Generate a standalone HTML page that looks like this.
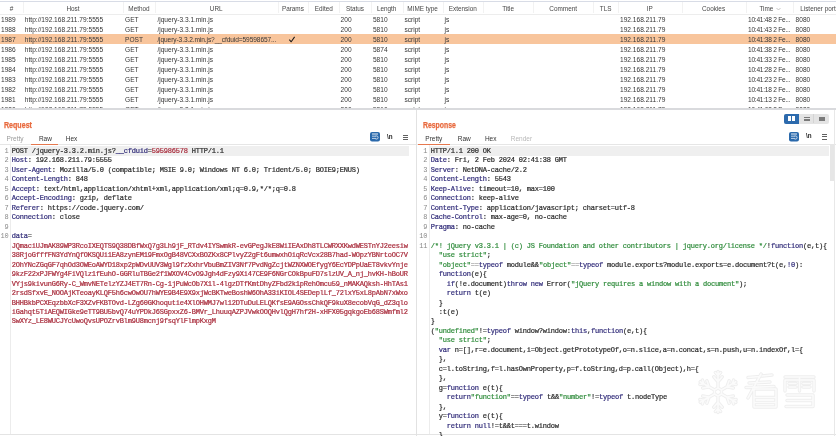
<!DOCTYPE html><html><head><meta charset="utf-8"><style>
*{margin:0;padding:0;box-sizing:border-box}
html,body{width:836px;height:436px;overflow:hidden;background:#fff;position:relative}
body{font-family:"Liberation Sans",sans-serif;color:#333}
.a{position:absolute;white-space:pre}
.hl{position:absolute;background:#dfe2ea}
.t{font-size:6.6px;line-height:10px;color:#363636}
.th{font-size:6.4px;line-height:11px;color:#484848;text-align:center}
.m{font-family:"Liberation Mono",monospace;font-size:7px;letter-spacing:-0.2px;line-height:9.47px;-webkit-text-stroke:0.2px currentColor}
.ln{color:#8a8a8a;-webkit-text-stroke:0}
.k{color:#2f2a78}
.v{color:#2a2a2a}
.r{color:#a82a3a}
.s{color:#2e8b3a}
.op{color:#888}
</style></head><body><div style="position:absolute;left:0;top:0;width:836px;height:436px;will-change:transform"><div class="hl" style="left:0;top:1px;width:836px;height:1px;background:#d8dce6"></div>
<div class="hl" style="left:0;top:14px;width:836px;height:1px;background:#ededed"></div>
<div class="a th" style="left:0px;top:3px;width:23px">#</div>
<div class="a th" style="left:23px;top:3px;width:100px">Host</div>
<div class="hl" style="left:23px;top:2px;width:1px;height:11px;background:#f2f2f2"></div>
<div class="a th" style="left:123px;top:3px;width:32px">Method</div>
<div class="hl" style="left:123px;top:2px;width:1px;height:11px;background:#f2f2f2"></div>
<div class="a th" style="left:155px;top:3px;width:122.5px">URL</div>
<div class="hl" style="left:155px;top:2px;width:1px;height:11px;background:#f2f2f2"></div>
<div class="a th" style="left:277.5px;top:3px;width:30.80000000000001px">Params</div>
<div class="hl" style="left:277.5px;top:2px;width:1px;height:11px;background:#f2f2f2"></div>
<div class="a th" style="left:308.3px;top:3px;width:31.099999999999966px">Edited</div>
<div class="hl" style="left:308.3px;top:2px;width:1px;height:11px;background:#f2f2f2"></div>
<div class="a th" style="left:339.4px;top:3px;width:31.100000000000023px">Status</div>
<div class="hl" style="left:339.4px;top:2px;width:1px;height:11px;background:#f2f2f2"></div>
<div class="a th" style="left:370.5px;top:3px;width:32.30000000000001px">Length</div>
<div class="hl" style="left:370.5px;top:2px;width:1px;height:11px;background:#f2f2f2"></div>
<div class="a th" style="left:402.8px;top:3px;width:39.69999999999999px">MIME type</div>
<div class="hl" style="left:402.8px;top:2px;width:1px;height:11px;background:#f2f2f2"></div>
<div class="a th" style="left:442.5px;top:3px;width:40.5px">Extension</div>
<div class="hl" style="left:442.5px;top:2px;width:1px;height:11px;background:#f2f2f2"></div>
<div class="a th" style="left:483px;top:3px;width:50.299999999999955px">Title</div>
<div class="hl" style="left:483px;top:2px;width:1px;height:11px;background:#f2f2f2"></div>
<div class="a th" style="left:533.3px;top:3px;width:59.80000000000007px">Comment</div>
<div class="hl" style="left:533.3px;top:2px;width:1px;height:11px;background:#f2f2f2"></div>
<div class="a th" style="left:593.1px;top:3px;width:25.100000000000023px">TLS</div>
<div class="hl" style="left:593.1px;top:2px;width:1px;height:11px;background:#f2f2f2"></div>
<div class="a th" style="left:618.2px;top:3px;width:63.299999999999955px">IP</div>
<div class="hl" style="left:618.2px;top:2px;width:1px;height:11px;background:#f2f2f2"></div>
<div class="a th" style="left:681.5px;top:3px;width:64.10000000000002px">Cookies</div>
<div class="hl" style="left:681.5px;top:2px;width:1px;height:11px;background:#f2f2f2"></div>
<div class="a th" style="left:745.6px;top:3px;width:41.60000000000002px">Time</div>
<svg style="position:absolute;left:776.2px;top:6.5px" width="5" height="4" viewBox="0 0 5 4"><path d="M0.5 1 L2.5 3 L4.5 1" stroke="#b0b0b0" stroke-width="0.7" fill="none"/></svg>
<div class="hl" style="left:745.6px;top:2px;width:1px;height:11px;background:#f2f2f2"></div>
<div class="a th" style="left:800.2px;top:3px;text-align:left">Listener port</div>
<div class="hl" style="left:793.2px;top:2px;width:1px;height:11px;background:#f2f2f2"></div>
<div class="a t" style="left:1px;top:15px;">1989</div>
<div class="a t" style="left:24.8px;top:15px;">http://192.168.211.79:5555</div>
<div class="a t" style="left:125px;top:15px;">GET</div>
<div class="a t" style="left:157.4px;top:15px;">/jquery-3.3.1.min.js</div>
<div class="a t" style="left:340.6px;top:15px;">200</div>
<div class="a t" style="left:372.9px;top:15px;">5810</div>
<div class="a t" style="left:404.4px;top:15px;">script</div>
<div class="a t" style="left:444.6px;top:15px;">js</div>
<div class="a t" style="left:620px;top:15px;">192.168.211.79</div>
<div class="a t" style="left:748px;top:15px;letter-spacing:-0.25px;">10:41:48 2 Fe...</div>
<div class="a t" style="left:795.6px;top:15px;">8080</div>
<div class="a t" style="left:1px;top:25px;">1988</div>
<div class="a t" style="left:24.8px;top:25px;">http://192.168.211.79:5555</div>
<div class="a t" style="left:125px;top:25px;">GET</div>
<div class="a t" style="left:157.4px;top:25px;">/jquery-3.3.1.min.js</div>
<div class="a t" style="left:340.6px;top:25px;">200</div>
<div class="a t" style="left:372.9px;top:25px;">5810</div>
<div class="a t" style="left:404.4px;top:25px;">script</div>
<div class="a t" style="left:444.6px;top:25px;">js</div>
<div class="a t" style="left:620px;top:25px;">192.168.211.79</div>
<div class="a t" style="left:748px;top:25px;letter-spacing:-0.25px;">10:41:43 2 Fe...</div>
<div class="a t" style="left:795.6px;top:25px;">8080</div>
<div class="hl" style="left:0;top:34px;width:836px;height:10px;background:#f8c59c"></div>
<div class="a t" style="left:1px;top:35px;">1987</div>
<div class="a t" style="left:24.8px;top:35px;">http://192.168.211.79:5555</div>
<div class="a t" style="left:125px;top:35px;">POST</div>
<div class="a t" style="left:157.4px;top:35px;letter-spacing:-0.1px;">/jquery-3.3.2.min.js?__cfduid=59598657...</div>
<div class="a t" style="left:340.6px;top:35px;">200</div>
<div class="a t" style="left:372.9px;top:35px;">5810</div>
<div class="a t" style="left:404.4px;top:35px;">script</div>
<div class="a t" style="left:444.6px;top:35px;">js</div>
<div class="a t" style="left:620px;top:35px;">192.168.211.79</div>
<div class="a t" style="left:748px;top:35px;letter-spacing:-0.25px;">10:41:38 2 Fe...</div>
<div class="a t" style="left:795.6px;top:35px;">8080</div>
<svg style="position:absolute;left:288px;top:36px" width="8" height="7" viewBox="0 0 8 7"><path d="M1.3 3.6 L3.2 5.8 L6.6 0.9" stroke="#1a1a1a" stroke-width="1.05" fill="none" stroke-linejoin="round"/></svg>
<div class="a t" style="left:1px;top:45px;">1986</div>
<div class="a t" style="left:24.8px;top:45px;">http://192.168.211.79:5555</div>
<div class="a t" style="left:125px;top:45px;">GET</div>
<div class="a t" style="left:157.4px;top:45px;">/jquery-3.3.1.min.js</div>
<div class="a t" style="left:340.6px;top:45px;">200</div>
<div class="a t" style="left:372.9px;top:45px;">5874</div>
<div class="a t" style="left:404.4px;top:45px;">script</div>
<div class="a t" style="left:444.6px;top:45px;">js</div>
<div class="a t" style="left:620px;top:45px;">192.168.211.79</div>
<div class="a t" style="left:748px;top:45px;letter-spacing:-0.25px;">10:41:38 2 Fe...</div>
<div class="a t" style="left:795.6px;top:45px;">8080</div>
<div class="a t" style="left:1px;top:55px;">1985</div>
<div class="a t" style="left:24.8px;top:55px;">http://192.168.211.79:5555</div>
<div class="a t" style="left:125px;top:55px;">GET</div>
<div class="a t" style="left:157.4px;top:55px;">/jquery-3.3.1.min.js</div>
<div class="a t" style="left:340.6px;top:55px;">200</div>
<div class="a t" style="left:372.9px;top:55px;">5810</div>
<div class="a t" style="left:404.4px;top:55px;">script</div>
<div class="a t" style="left:444.6px;top:55px;">js</div>
<div class="a t" style="left:620px;top:55px;">192.168.211.79</div>
<div class="a t" style="left:748px;top:55px;letter-spacing:-0.25px;">10:41:33 2 Fe...</div>
<div class="a t" style="left:795.6px;top:55px;">8080</div>
<div class="a t" style="left:1px;top:65px;">1984</div>
<div class="a t" style="left:24.8px;top:65px;">http://192.168.211.79:5555</div>
<div class="a t" style="left:125px;top:65px;">GET</div>
<div class="a t" style="left:157.4px;top:65px;">/jquery-3.3.1.min.js</div>
<div class="a t" style="left:340.6px;top:65px;">200</div>
<div class="a t" style="left:372.9px;top:65px;">5810</div>
<div class="a t" style="left:404.4px;top:65px;">script</div>
<div class="a t" style="left:444.6px;top:65px;">js</div>
<div class="a t" style="left:620px;top:65px;">192.168.211.79</div>
<div class="a t" style="left:748px;top:65px;letter-spacing:-0.25px;">10:41:28 2 Fe...</div>
<div class="a t" style="left:795.6px;top:65px;">8080</div>
<div class="a t" style="left:1px;top:75px;">1983</div>
<div class="a t" style="left:24.8px;top:75px;">http://192.168.211.79:5555</div>
<div class="a t" style="left:125px;top:75px;">GET</div>
<div class="a t" style="left:157.4px;top:75px;">/jquery-3.3.1.min.js</div>
<div class="a t" style="left:340.6px;top:75px;">200</div>
<div class="a t" style="left:372.9px;top:75px;">5810</div>
<div class="a t" style="left:404.4px;top:75px;">script</div>
<div class="a t" style="left:444.6px;top:75px;">js</div>
<div class="a t" style="left:620px;top:75px;">192.168.211.79</div>
<div class="a t" style="left:748px;top:75px;letter-spacing:-0.25px;">10:41:23 2 Fe...</div>
<div class="a t" style="left:795.6px;top:75px;">8080</div>
<div class="a t" style="left:1px;top:85px;">1982</div>
<div class="a t" style="left:24.8px;top:85px;">http://192.168.211.79:5555</div>
<div class="a t" style="left:125px;top:85px;">GET</div>
<div class="a t" style="left:157.4px;top:85px;">/jquery-3.3.1.min.js</div>
<div class="a t" style="left:340.6px;top:85px;">200</div>
<div class="a t" style="left:372.9px;top:85px;">5810</div>
<div class="a t" style="left:404.4px;top:85px;">script</div>
<div class="a t" style="left:444.6px;top:85px;">js</div>
<div class="a t" style="left:620px;top:85px;">192.168.211.79</div>
<div class="a t" style="left:748px;top:85px;letter-spacing:-0.25px;">10:41:18 2 Fe...</div>
<div class="a t" style="left:795.6px;top:85px;">8080</div>
<div class="a t" style="left:1px;top:95px;">1981</div>
<div class="a t" style="left:24.8px;top:95px;">http://192.168.211.79:5555</div>
<div class="a t" style="left:125px;top:95px;">GET</div>
<div class="a t" style="left:157.4px;top:95px;">/jquery-3.3.1.min.js</div>
<div class="a t" style="left:340.6px;top:95px;">200</div>
<div class="a t" style="left:372.9px;top:95px;">5810</div>
<div class="a t" style="left:404.4px;top:95px;">script</div>
<div class="a t" style="left:444.6px;top:95px;">js</div>
<div class="a t" style="left:620px;top:95px;">192.168.211.79</div>
<div class="a t" style="left:748px;top:95px;letter-spacing:-0.25px;">10:41:13 2 Fe...</div>
<div class="a t" style="left:795.6px;top:95px;">8080</div>
<div class="a t" style="left:1px;top:105px;">1980</div>
<div class="a t" style="left:24.8px;top:105px;">http://192.168.211.79:5555</div>
<div class="a t" style="left:125px;top:105px;">GET</div>
<div class="a t" style="left:157.4px;top:105px;">/jquery-3.3.1.min.js</div>
<div class="a t" style="left:340.6px;top:105px;">200</div>
<div class="a t" style="left:372.9px;top:105px;">5810</div>
<div class="a t" style="left:404.4px;top:105px;">script</div>
<div class="a t" style="left:444.6px;top:105px;">js</div>
<div class="a t" style="left:620px;top:105px;">192.168.211.79</div>
<div class="a t" style="left:748px;top:105px;letter-spacing:-0.25px;">10:41:08 2 Fe...</div>
<div class="a t" style="left:795.6px;top:105px;">8080</div>
<div class="hl" style="left:0;top:108px;width:836px;height:328px;background:#fff"></div>
<div class="hl" style="left:0;top:108px;width:836px;height:2px;background:#d9dadd"></div>
<div class="hl" style="left:416px;top:110px;width:1px;height:326px;background:#e2e2e2"></div>
<div class="a" style="left:4px;top:120.8px;font-size:8.4px;line-height:9px;font-weight:bold;color:#e8693d;-webkit-text-stroke:0.25px #e8693d;transform:scaleX(0.845);transform-origin:0 0">Request</div>
<div class="a" style="left:423px;top:120.8px;font-size:8.4px;line-height:9px;font-weight:bold;color:#e8693d;-webkit-text-stroke:0.25px #e8693d;transform:scaleX(0.82);transform-origin:0 0">Response</div>
<div class="a" style="left:6.6px;top:135px;font-size:6.5px;color:#9a9a9a">Pretty</div>
<div class="a" style="left:38.9px;top:135px;font-size:6.5px;color:#333">Raw</div>
<div class="a" style="left:65.8px;top:135px;font-size:6.5px;color:#333">Hex</div>
<div class="a" style="left:425.3px;top:135px;font-size:6.5px;color:#333">Pretty</div>
<div class="a" style="left:457.8px;top:135px;font-size:6.5px;color:#333">Raw</div>
<div class="a" style="left:484.9px;top:135px;font-size:6.5px;color:#333">Hex</div>
<div class="a" style="left:510.8px;top:135px;font-size:6.5px;color:#b8b8b8">Render</div>
<div class="hl" style="left:0;top:144px;width:416px;height:1px;background:#e6e6e6"></div>
<div class="hl" style="left:417px;top:144px;width:419px;height:1px;background:#e6e6e6"></div>
<div class="hl" style="left:31px;top:143.6px;width:27px;height:1px;background:#e6784e"></div>
<div class="hl" style="left:418px;top:143.6px;width:32px;height:1px;background:#e6784e"></div>
<svg style="position:absolute;left:370px;top:132.4px" width="10" height="9.5" viewBox="0 0 10 9.5">
<rect x="0" y="0" width="10" height="9.5" rx="2" fill="#2a69ab"/>
<path d="M2 2 H8" stroke="#fff" stroke-width="0.9"/>
<path d="M2 4.2 H6.2 M2 6.4 H6.2" stroke="#e4eef8" stroke-width="0.8"/>
<path d="M5.6 3.9 H6.5 A1.6 1.6 0 0 1 6.5 7.1 H5.6" stroke="#e4eef8" stroke-width="0.8" fill="none"/>
</svg>
<div class="a" style="left:386.8px;top:132.6px;font-size:7.4px;line-height:8px;color:#1e1e1e;font-weight:bold;transform:scaleX(0.85);transform-origin:0 0">\n</div>
<div class="hl" style="left:402.6px;top:134.70000000000002px;width:5.2px;height:0.9px;background:#606060"></div>
<div class="hl" style="left:402.6px;top:136.85000000000002px;width:5.2px;height:0.9px;background:#606060"></div>
<div class="hl" style="left:402.6px;top:139.00000000000003px;width:5.2px;height:0.9px;background:#606060"></div>
<svg style="position:absolute;left:789px;top:132px" width="10" height="9.5" viewBox="0 0 10 9.5">
<rect x="0" y="0" width="10" height="9.5" rx="2" fill="#2a69ab"/>
<path d="M2 2 H8" stroke="#fff" stroke-width="0.9"/>
<path d="M2 4.2 H6.2 M2 6.4 H6.2" stroke="#e4eef8" stroke-width="0.8"/>
<path d="M5.6 3.9 H6.5 A1.6 1.6 0 0 1 6.5 7.1 H5.6" stroke="#e4eef8" stroke-width="0.8" fill="none"/>
</svg>
<div class="a" style="left:805.8px;top:132.2px;font-size:7.4px;line-height:8px;color:#1e1e1e;font-weight:bold;transform:scaleX(0.85);transform-origin:0 0">\n</div>
<div class="hl" style="left:821.6px;top:134.3px;width:5.2px;height:0.9px;background:#606060"></div>
<div class="hl" style="left:821.6px;top:136.45000000000002px;width:5.2px;height:0.9px;background:#606060"></div>
<div class="hl" style="left:821.6px;top:138.60000000000002px;width:5.2px;height:0.9px;background:#606060"></div>
<div class="hl" style="left:784px;top:113.5px;width:45px;height:10px;border-radius:2px;background:#e4e4e4"></div>
<div class="hl" style="left:784px;top:113.5px;width:14.5px;height:10px;border-radius:2px 0 0 2px;background:#2c6aad"></div>
<div class="hl" style="left:788px;top:116px;width:3px;height:5px;background:#fff"></div>
<div class="hl" style="left:792px;top:116px;width:3px;height:5px;background:#fff"></div>
<div class="hl" style="left:803.5px;top:116.5px;width:6px;height:1.6px;background:#7a7a7a"></div>
<div class="hl" style="left:803.5px;top:119.3px;width:6px;height:1.6px;background:#7a7a7a"></div>
<div class="hl" style="left:813.2px;top:114px;width:0.6px;height:9px;background:#d4d4d4"></div>
<div class="hl" style="left:818.5px;top:116.5px;width:6.5px;height:4.5px;background:#7a7a7a"></div>
<div class="hl" style="left:10px;top:145px;width:1px;height:290px;background:#ececec"></div>
<div class="hl" style="left:429px;top:145px;width:1px;height:290px;background:#ececec"></div>
<div class="hl" style="left:0;top:434px;width:416px;height:1px;background:#e4e4e4"></div>
<div class="hl" style="left:417px;top:434px;width:419px;height:1px;background:#e4e4e4"></div>
<div class="hl" style="left:11px;top:146px;width:398px;height:9.5px;background:#efefef"></div>
<div class="hl" style="left:430px;top:146px;width:399px;height:9.5px;background:#efefef"></div>
<div class="hl" style="left:829.5px;top:144px;width:4.5px;height:37px;background:#e6e6e6"></div>
<div class="hl" style="left:834px;top:110px;width:1px;height:326px;background:#e8e8e8"></div>
<div class="a m ln" style="left:-11.4px;width:20px;text-align:right;top:147.0px">1</div>
<div class="a m" style="left:11.7px;top:147.0px"><span class="v">POST /jquery-3.3.2.min.js?</span><span class="k">__cfduid</span><span class="v">=</span><span class="r">595986578</span><span class="v"> HTTP/1.1</span></div>
<div class="a m ln" style="left:-11.4px;width:20px;text-align:right;top:156.47px">2</div>
<div class="a m" style="left:11.7px;top:156.47px"><span class="k">Host</span><span class="v">: 192.168.211.79:5555</span></div>
<div class="a m ln" style="left:-11.4px;width:20px;text-align:right;top:165.94px">3</div>
<div class="a m" style="left:11.7px;top:165.94px"><span class="k">User-Agent</span><span class="v">: Mozilla/5.0 (compatible; MSIE 9.0; Windows NT 6.0; Trident/5.0; BOIE9;ENUS)</span></div>
<div class="a m ln" style="left:-11.4px;width:20px;text-align:right;top:175.41px">4</div>
<div class="a m" style="left:11.7px;top:175.41px"><span class="k">Content-Length</span><span class="v">: 848</span></div>
<div class="a m ln" style="left:-11.4px;width:20px;text-align:right;top:184.88px">5</div>
<div class="a m" style="left:11.7px;top:184.88px"><span class="k">Accept</span><span class="v">: text/html,application/xhtml+xml,application/xml;q=0.9,*/*;q=0.8</span></div>
<div class="a m ln" style="left:-11.4px;width:20px;text-align:right;top:194.35px">6</div>
<div class="a m" style="left:11.7px;top:194.35px"><span class="k">Accept-Encoding</span><span class="v">: gzip, deflate</span></div>
<div class="a m ln" style="left:-11.4px;width:20px;text-align:right;top:203.82px">7</div>
<div class="a m" style="left:11.7px;top:203.82px"><span class="k">Referer</span><span class="v">: https://code.jquery.com/</span></div>
<div class="a m ln" style="left:-11.4px;width:20px;text-align:right;top:213.29000000000002px">8</div>
<div class="a m" style="left:11.7px;top:213.29000000000002px"><span class="k">Connection</span><span class="v">: close</span></div>
<div class="a m ln" style="left:-11.4px;width:20px;text-align:right;top:222.76px">9</div>
<div class="a m" style="left:11.7px;top:222.76px"></div>
<div class="a m ln" style="left:-11.4px;width:20px;text-align:right;top:232.23000000000002px">10</div>
<div class="a m" style="left:11.7px;top:232.23000000000002px"><span class="k">data</span><span class="v">=</span></div>
<div class="a m" style="left:11.7px;top:241.7px"><span class="r">JQmaciUJmAK89WP3RcoIXEQTS9Q38DBfWxQ7g3Lh9jF_RTdv4IYSwmkR-evGPegJkE8WiIEAxDh8TLCWRXXKwdWESTnYJ2eesiw</span></div>
<div class="a m" style="left:11.7px;top:251.17000000000002px"><span class="r">38RjoGfffFN3YdYnQfOKSQUi1EA8zynEM19FmxOgB48VCXxBOZKx8CPlvyZ2gFt6umwxhOiqRcVcx28B7had-WOpzYBNrtoOC7V</span></div>
<div class="a m" style="left:11.7px;top:260.64px"><span class="r">2OhYNcZGqGF7qhOd3OWEoAWYD18xp2pWDvUUV3Wgl9fzXxhrVbuBmZIV3Nf7PvdNgZcjtWZNXWOEfygY6EcYDPpUaET8vkvYnje</span></div>
<div class="a m" style="left:11.7px;top:270.11px"><span class="r">9kzF22xPJFWYg4FiVQlz1fEuhO-GGRluTBGe2f1WXOV4CvO9Jgh4dFzy9Xi47CE9F6NGrCOkBpuFD7slzUV_A_nj_hvKH-hBoUR</span></div>
<div class="a m" style="left:11.7px;top:279.58000000000004px"><span class="r">VYjs9kivunG6Ry-C_WmvNETelzYZJ4ET7Rn-Cg-1jPuWcOb7X1l-4lgzDTfKmtDhyZFbd2k1pRehOmcu59_nMAKAQksh-HhTAs1</span></div>
<div class="a m" style="left:11.7px;top:289.05px"><span class="r">2rsdSfxvE_NOOAjKTeoayKLQF5h6cwOwOU7hWYE9B4E9X9xjWcBKTweBoshW6OhA33iKIOL4SEDeplLf_72lxY5xL8pAbN7xWxo</span></div>
<div class="a m" style="left:11.7px;top:298.52px"><span class="r">BHHBkbPCXEqzbbXcF3XZvFKBTOvd-LZg60GKhoqutie4XlOHWMJ7wl12DTuDuLELQKfsE9AGOssChkQF9kuX8ecobVqG_dZ3qlo</span></div>
<div class="a m" style="left:11.7px;top:307.99px"><span class="r">iGahqt5TiAEQWIGke9eTT9BU5bvQ74uYPDkJ6SGpxxZ6-BMVr_LhuuqAZPJVwkOOQHvlQgH7hf2H-xHFX05gqkgoEb68SWmfml2</span></div>
<div class="a m" style="left:11.7px;top:317.46000000000004px"><span class="r">SwXYz_LE8WUCJYcUwoQvsUPOZrvBlm9U8mcnj9fsqYlFlmpKxgM</span></div>
<div class="a m ln" style="left:407.2px;width:20px;text-align:right;top:147.0px">1</div>
<div class="a m" style="left:430.8px;top:147.0px"><span class="v">HTTP/1.1 200 OK</span></div>
<div class="a m ln" style="left:407.2px;width:20px;text-align:right;top:156.47px">2</div>
<div class="a m" style="left:430.8px;top:156.47px"><span class="k">Date</span><span class="v">: Fri, 2 Feb 2024 02:41:38 GMT</span></div>
<div class="a m ln" style="left:407.2px;width:20px;text-align:right;top:165.94px">3</div>
<div class="a m" style="left:430.8px;top:165.94px"><span class="k">Server</span><span class="v">: NetDNA-cache/2.2</span></div>
<div class="a m ln" style="left:407.2px;width:20px;text-align:right;top:175.41px">4</div>
<div class="a m" style="left:430.8px;top:175.41px"><span class="k">Content-Length</span><span class="v">: 5543</span></div>
<div class="a m ln" style="left:407.2px;width:20px;text-align:right;top:184.88px">5</div>
<div class="a m" style="left:430.8px;top:184.88px"><span class="k">Keep-Alive</span><span class="v">: timeout=10, max=100</span></div>
<div class="a m ln" style="left:407.2px;width:20px;text-align:right;top:194.35px">6</div>
<div class="a m" style="left:430.8px;top:194.35px"><span class="k">Connection</span><span class="v">: keep-alive</span></div>
<div class="a m ln" style="left:407.2px;width:20px;text-align:right;top:203.82px">7</div>
<div class="a m" style="left:430.8px;top:203.82px"><span class="k">Content-Type</span><span class="v">: application/javascript; charset=utf-8</span></div>
<div class="a m ln" style="left:407.2px;width:20px;text-align:right;top:213.29000000000002px">8</div>
<div class="a m" style="left:430.8px;top:213.29000000000002px"><span class="k">Cache-Control</span><span class="v">: max-age=0, no-cache</span></div>
<div class="a m ln" style="left:407.2px;width:20px;text-align:right;top:222.76px">9</div>
<div class="a m" style="left:430.8px;top:222.76px"><span class="k">Pragma</span><span class="v">: no-cache</span></div>
<div class="a m ln" style="left:407.2px;width:20px;text-align:right;top:232.23000000000002px">10</div>
<div class="a m" style="left:430.8px;top:232.23000000000002px"></div>
<div class="a m ln" style="left:407.2px;width:20px;text-align:right;top:241.7px">11</div>
<div class="a m" style="left:430.8px;top:241.7px"><span class="s">/*! jQuery v3.3.1 | (c) JS Foundation and other contributors | jquery.org/license */</span><span class="v">!</span><span class="k">function</span><span class="v">(e,t){</span></div>
<div class="a m" style="left:430.8px;top:251.17000000000002px"><span class="v">  </span><span class="s">&quot;use strict&quot;</span><span class="v">;</span></div>
<div class="a m" style="left:430.8px;top:260.64px"><span class="v">  </span><span class="s">&quot;object&quot;</span><span class="op">==</span><span class="k">typeof</span><span class="v"> module&amp;&amp;</span><span class="s">&quot;object&quot;</span><span class="op">==</span><span class="k">typeof</span><span class="v"> module.exports?module.exports=e.document?t(e,</span><span class="k">!0</span><span class="v">):</span></div>
<div class="a m" style="left:430.8px;top:270.11px"><span class="v">  </span><span class="k">function</span><span class="v">(e){</span></div>
<div class="a m" style="left:430.8px;top:279.58000000000004px"><span class="v">    </span><span class="k">if</span><span class="v">(!e.document)</span><span class="k">throw new</span><span class="v"> Error(</span><span class="s">&quot;jQuery requires a window with a document&quot;</span><span class="v">);</span></div>
<div class="a m" style="left:430.8px;top:289.05px"><span class="v">    </span><span class="k">return</span><span class="v"> t(e)</span></div>
<div class="a m" style="left:430.8px;top:298.52px"><span class="v">  }</span></div>
<div class="a m" style="left:430.8px;top:307.99px"><span class="v">  :t(e)</span></div>
<div class="a m" style="left:430.8px;top:317.46000000000004px"><span class="v">}</span></div>
<div class="a m" style="left:430.8px;top:326.93px"><span class="v">(</span><span class="s">&quot;undefined&quot;</span><span class="v">!=</span><span class="k">typeof</span><span class="v"> window?window:</span><span class="k">this</span><span class="v">,</span><span class="k">function</span><span class="v">(e,t){</span></div>
<div class="a m" style="left:430.8px;top:336.4px"><span class="v">  </span><span class="s">&quot;use strict&quot;</span><span class="v">;</span></div>
<div class="a m" style="left:430.8px;top:345.87px"><span class="v">  </span><span class="k">var</span><span class="v"> n=[],r=e.document,i=Object.getPrototypeOf,o=n.slice,a=n.concat,s=n.push,u=n.indexOf,l={</span></div>
<div class="a m" style="left:430.8px;top:355.34000000000003px"><span class="v">  },</span></div>
<div class="a m" style="left:430.8px;top:364.81px"><span class="v">  c=l.toString,f=l.hasOwnProperty,p=f.toString,d=p.call(Object),h={</span></div>
<div class="a m" style="left:430.8px;top:374.28000000000003px"><span class="v">  },</span></div>
<div class="a m" style="left:430.8px;top:383.75px"><span class="v">  g=</span><span class="k">function</span><span class="v"> e(t){</span></div>
<div class="a m" style="left:430.8px;top:393.22px"><span class="v">    </span><span class="k">return</span><span class="s">&quot;function&quot;</span><span class="v">==</span><span class="k">typeof</span><span class="v"> t&amp;&amp;</span><span class="s">&quot;number&quot;</span><span class="v">!=</span><span class="k">typeof</span><span class="v"> t.nodeType</span></div>
<div class="a m" style="left:430.8px;top:402.69000000000005px"><span class="v">  },</span></div>
<div class="a m" style="left:430.8px;top:412.16px"><span class="v">  y=</span><span class="k">function</span><span class="v"> e(t){</span></div>
<div class="a m" style="left:430.8px;top:421.63px"><span class="v">    </span><span class="k">return null</span><span class="v">!=t&amp;&amp;t===t.window</span></div>
<div class="a m" style="left:430.8px;top:431.1px"><span class="v">  }</span></div>
<svg style="position:absolute;left:690px;top:360px" width="140" height="62" viewBox="0 0 140 62">
<defs><filter id="bl" x="-10%" y="-10%" width="120%" height="120%"><feGaussianBlur stdDeviation="0.5"/></filter></defs>
<g filter="url(#bl)" fill="none" stroke-linecap="round" stroke-linejoin="round">
<path d="M28.0 28.0 L28.0 11.5 M28.0 21.8 L32.2 16.8 M28.0 21.8 L23.8 16.8 M28.0 15.6 L30.6 12.5 M28.0 15.6 L25.4 12.5 M24.5 30.0 L10.2 21.8 M19.1 26.9 L16.9 20.8 M19.1 26.9 L12.7 28.0 M13.8 23.8 L12.4 20.0 M13.8 23.8 L9.9 24.5 M24.5 34.0 L10.2 42.2 M19.1 37.1 L12.7 36.0 M19.1 37.1 L16.9 43.2 M13.8 40.2 L9.9 39.5 M13.8 40.2 L12.4 44.0 M28.0 36.0 L28.0 52.5 M28.0 42.2 L23.8 47.2 M28.0 42.2 L32.2 47.2 M28.0 48.4 L25.4 51.5 M28.0 48.4 L30.6 51.5 M31.5 34.0 L45.8 42.3 M36.9 37.1 L39.1 43.2 M36.9 37.1 L43.3 36.0 M42.2 40.2 L43.6 44.0 M42.2 40.2 L46.1 39.5 M31.5 30.0 L45.8 21.8 M36.9 26.9 L43.3 28.0 M36.9 26.9 L39.1 20.8 M42.2 23.8 L46.1 24.5 M42.2 23.8 L43.6 20.0 M31.5 30.0 L28.0 28.0 L24.5 30.0 L24.5 34.0 L28.0 36.0 L31.5 34.0 Z M58 17.5 L70 16.5 M72 16 L82 15 M59 23 L80 22 M56 27.5 L84 26.5 M71 14 L58 38 M64 29 H86 V47 H64 Z M64 37.5 H86 M64 42.5 H86 M95 17 H124 M95 20 V31 M95 20 H124 V31 M109.5 17 V31 M99 23.5 H106 M99 27 H106 M113 23.5 H120 M113 27 H120 M97 35 H123 V46.5 H96 M97 40.5 H123" stroke="#eeeeee" stroke-width="3.4"/>
<path d="M28.0 28.0 L28.0 11.5 M28.0 21.8 L32.2 16.8 M28.0 21.8 L23.8 16.8 M28.0 15.6 L30.6 12.5 M28.0 15.6 L25.4 12.5 M24.5 30.0 L10.2 21.8 M19.1 26.9 L16.9 20.8 M19.1 26.9 L12.7 28.0 M13.8 23.8 L12.4 20.0 M13.8 23.8 L9.9 24.5 M24.5 34.0 L10.2 42.2 M19.1 37.1 L12.7 36.0 M19.1 37.1 L16.9 43.2 M13.8 40.2 L9.9 39.5 M13.8 40.2 L12.4 44.0 M28.0 36.0 L28.0 52.5 M28.0 42.2 L23.8 47.2 M28.0 42.2 L32.2 47.2 M28.0 48.4 L25.4 51.5 M28.0 48.4 L30.6 51.5 M31.5 34.0 L45.8 42.3 M36.9 37.1 L39.1 43.2 M36.9 37.1 L43.3 36.0 M42.2 40.2 L43.6 44.0 M42.2 40.2 L46.1 39.5 M31.5 30.0 L45.8 21.8 M36.9 26.9 L43.3 28.0 M36.9 26.9 L39.1 20.8 M42.2 23.8 L46.1 24.5 M42.2 23.8 L43.6 20.0 M31.5 30.0 L28.0 28.0 L24.5 30.0 L24.5 34.0 L28.0 36.0 L31.5 34.0 Z M58 17.5 L70 16.5 M72 16 L82 15 M59 23 L80 22 M56 27.5 L84 26.5 M71 14 L58 38 M64 29 H86 V47 H64 Z M64 37.5 H86 M64 42.5 H86 M95 17 H124 M95 20 V31 M95 20 H124 V31 M109.5 17 V31 M99 23.5 H106 M99 27 H106 M113 23.5 H120 M113 27 H120 M97 35 H123 V46.5 H96 M97 40.5 H123" stroke="#fbfbfb" stroke-width="1.6"/>
</g>
</svg></div></body></html>
